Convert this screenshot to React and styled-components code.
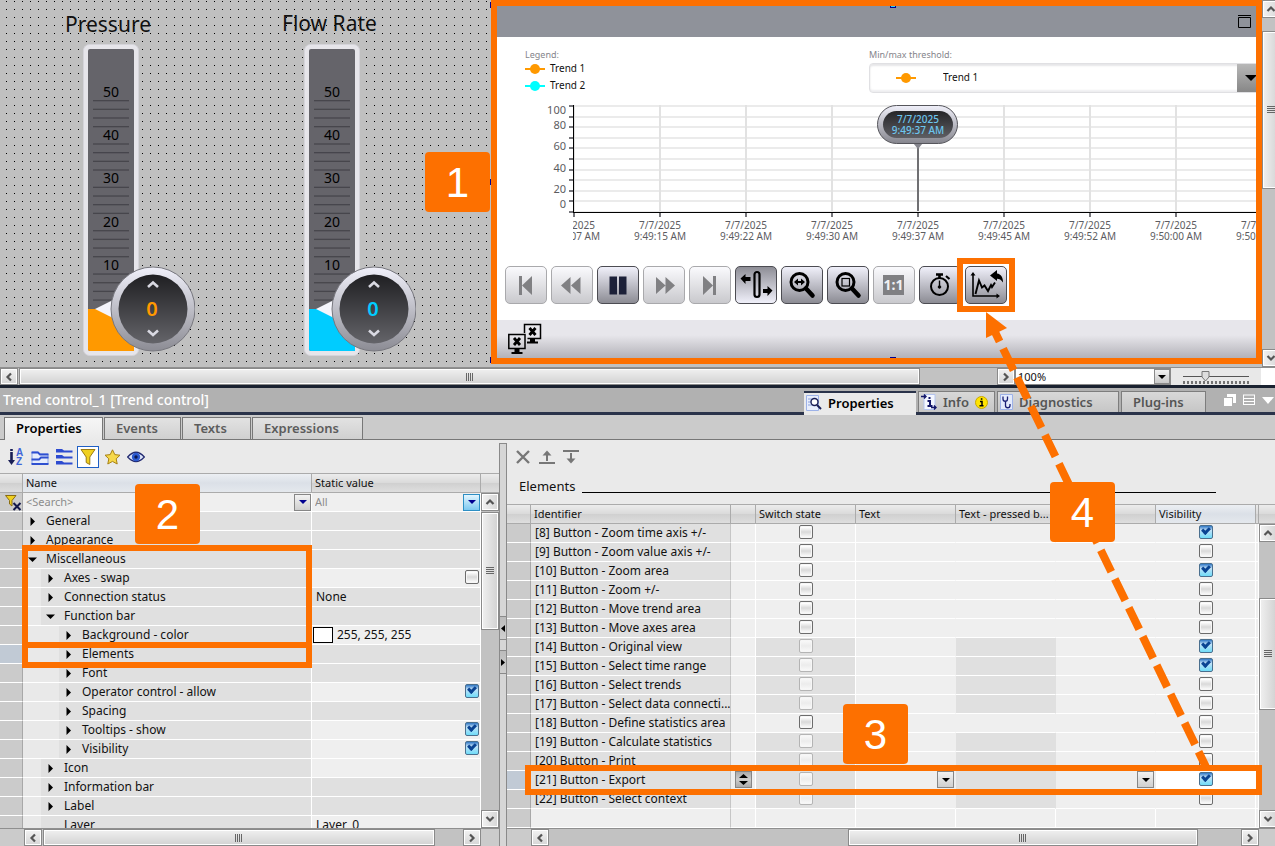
import React from "react";
import styled, { createGlobalStyle, css } from "styled-components";

const ORANGE = "#fd7000";

const GlobalStyle = createGlobalStyle`
  *, *::before, *::after { box-sizing: border-box; }
  body {
    margin: 0;
    background: #c0c0c0;
    color: #111;
    font-family: "Noto Sans", "Open Sans", sans-serif;
    font-size: 12px;
  }
  button, input, select { font: inherit; color: inherit; margin: 0; padding: 0; }
  h1, h2 { margin: 0; }
  td svg { display: block; }
`;

const Page = styled.div`
  position: relative;
  display: flex;
  flex-direction: column;
  height: 100vh;
  overflow: hidden;
`;

/* ---------- scroll bars ---------- */

const Bar = styled.div`
  display: flex;
  flex: ${(p) => (p.$vertical ? "0 0 auto" : "1 1 0")};
  flex-direction: ${(p) => (p.$vertical ? "column" : "row")};
  ${(p) => (p.$vertical ? "width: 18px;" : "height: 17px;")}
  background: #c2c2c2;
`;

const BarButton = styled.button`
  display: flex;
  flex: 0 0 18px;
  align-items: center;
  justify-content: center;
  border: 1px solid #8a8a8a;
  background: linear-gradient(${(p) => (p.$vertical ? "90deg" : "180deg")}, #f2f2f2, #d6d6d6);
  box-shadow: inset 0 0 0 1px #fff;
`;

const Thumb = styled.div`
  display: flex;
  flex: ${(p) => p.$size};
  align-items: center;
  justify-content: center;
  border: 1px solid #8a8a8a;
  background: linear-gradient(${(p) => (p.$vertical ? "90deg" : "180deg")}, #f0f0f0, #d2d2d2);
  box-shadow: inset 0 0 0 1px #fff;
`;

const Grip = styled.span`
  ${(p) =>
    p.$vertical
      ? css`
          width: 8px;
          height: 8px;
          background: repeating-linear-gradient(180deg, #666 0 1px, transparent 1px 2px);
        `
      : css`
          width: 8px;
          height: 8px;
          background: repeating-linear-gradient(90deg, #666 0 1px, transparent 1px 2px);
        `}
`;

const Space = styled.span`
  flex: ${(p) => p.$size};
`;

const turns = { up: 0, right: 90, down: 180, left: 270 };

function Chevron({ to }) {
  return (
    <svg width="10" height="10" viewBox="0 0 10 10" aria-hidden="true">
      <path d="M1.5 7 L5 3.5 L8.5 7" fill="none" stroke="#555" strokeWidth="2.2" transform={`rotate(${turns[to]} 5 5)`} />
    </svg>
  );
}

function ScrollBar({ vertical, before = "0 0 1px", thumb, after = "1 1 0", className }) {
  return (
    <Bar $vertical={vertical} className={className}>
      <BarButton $vertical={vertical} aria-label={vertical ? "Scroll up" : "Scroll left"}>
        <Chevron to={vertical ? "up" : "left"} />
      </BarButton>
      <Space $size={before} />
      <Thumb $vertical={vertical} $size={thumb}>
        <Grip $vertical={vertical} />
      </Thumb>
      <Space $size={after} />
      <BarButton $vertical={vertical} aria-label={vertical ? "Scroll down" : "Scroll right"}>
        <Chevron to={vertical ? "down" : "right"} />
      </BarButton>
    </Bar>
  );
}

/* ---------- screen editor ---------- */

const Editor = styled.section`
  display: flex;
  flex: 0 0 367px;
`;

const Canvas = styled.div`
  display: flex;
  flex: 1 1 0;
  min-width: 0;
  align-items: flex-start;
  background-color: #c0c0c0;
  background-image: linear-gradient(180deg, transparent 1px, #c0c0c0 1px),
    linear-gradient(90deg, #000 1px, #c0c0c0 1px);
  background-size: 8px 8px;
  background-position: 6px 1px;
`;

const GaugeArea = styled.div`
  position: relative;
  flex: 0 0 491px;
  align-self: stretch;
`;

const GaugeItem = styled.div`
  position: absolute;
  top: ${(p) => p.$y}px;
  left: ${(p) => p.$x}px;
`;

const GaugeTitle = styled.h2`
  font-size: 21px;
  font-weight: 400;
  line-height: 26px;
  white-space: nowrap;
`;

function Gauge({ id, color }) {
  const ticks = [];
  for (let i = 0; i <= 23; i += 1) {
    if (i % 5 !== 4) ticks.push(57 + i * 8.67);
  }
  const labels = [
    [50, 48],
    [40, 91],
    [30, 134],
    [20, 178],
    [10, 221],
  ];
  return (
    <svg width="112" height="314" viewBox="0 0 112 314">
      <defs>
        <linearGradient id={`${id}-ring`} x1="0" y1="0" x2="0" y2="1">
          <stop offset="0" stopColor="#f0f0fa" />
          <stop offset="1" stopColor="#8c8c94" />
        </linearGradient>
        <linearGradient id={`${id}-disk`} x1="0" y1="0" x2="0" y2="1">
          <stop offset="0" stopColor="#1f1f22" />
          <stop offset="1" stopColor="#646469" />
        </linearGradient>
      </defs>
      <rect x="0.5" y="0.5" width="55" height="311" rx="6" fill="#e6e5ea" stroke="#d5d4da" />
      <rect x="5" y="5" width="46" height="302" rx="2" fill="#65646a" />
      {ticks.map((y) => (
        <rect key={y} x="10" y={y - 1} width="36" height="1.3" fill="#47464c" />
      ))}
      <path d="M5 265 H51 V307 H7 Q5 307 5 305 Z" fill={color} />
      <path d="M12 265 L36 253 V277 Z" fill="#f4f4fb" />
      <g fontSize="14" textAnchor="middle" fill="#000">
        {labels.map(([n, y]) => (
          <text key={n} x="28" y={y + 5}>
            {n}
          </text>
        ))}
      </g>
      <circle cx="70" cy="265" r="42" fill={`url(#${id}-ring)`} stroke="#77777e" />
      <circle cx="70" cy="265" r="34.5" fill={`url(#${id}-disk)`} />
      <path d="M65 243 L70 238.5 L75 243 M65 286.500 L70 291 L75 286.500" fill="none" stroke="#d9d9e2" strokeWidth="2.600" />
      <text x="69" y="272" textAnchor="middle" fontSize="20" fontWeight="600" fill={color}>
        0
      </text>
    </svg>
  );
}

/* ---------- trend control ---------- */

const TrendFrame = styled.div`
  position: relative;
  flex: 1 1 0;
  min-width: 0;
  border: 6px solid ${ORANGE};
  background: #fff;
`;

const TrendHeader = styled.div`
  display: flex;
  justify-content: flex-end;
  padding: 9px 5px 9px 0;
  height: 31px;
  background: #8f929a;
`;

const TrendBody = styled.div`
  height: 283px;
  overflow: hidden;
`;

const LegendRow = styled.div`
  display: flex;
  padding: 13px 0 0 28px;
  height: 57px;
`;

const LegendColumn = styled.div`
  flex: ${(p) => (p.$grow ? "1 1 0" : "0 0 344px")};
  min-width: 0;
  margin-right: ${(p) => (p.$grow ? "-8px" : "0")};
`;

const Caption = styled.label`
  display: block;
  font-size: 9px;
  line-height: 10px;
  color: #85858b;
`;

const LegendItem = styled.div`
  display: flex;
  align-items: center;
  gap: 5px;
  font-size: 10px;
  line-height: 17px;
`;

const ComboBox = styled.div`
  position: relative;
  margin-top: 3px;
  height: 30px;
  border: 1px solid #e0e0e3;
  border-radius: 4px;
  background: #fff;
  box-shadow: inset 0 2px 2px #e6e6e8, inset 0 -2px 2px #eeeef0;
  overflow: hidden;

  select {
    width: 100%;
    height: 100%;
    padding: 0 0 2px 73px;
    border: 0;
    appearance: none;
    background: transparent;
    font-size: 10px;
  }
`;

const ComboMarker = styled.span`
  position: absolute;
  top: 0;
  bottom: 0;
  left: 26px;
  display: flex;
  align-items: center;
  pointer-events: none;
`;

const ComboArrow = styled.span`
  position: absolute;
  top: -1px;
  right: -1px;
  display: flex;
  align-items: center;
  justify-content: center;
  width: 27px;
  height: 30px;
  background: linear-gradient(#b9b9b9, #858585);
  pointer-events: none;
`;

function Marker({ color }) {
  return (
    <svg width="20" height="12" viewBox="0 0 20 12" aria-hidden="true">
      <path d="M0 6 H20" stroke={color} strokeWidth="2" />
      <circle cx="10" cy="6" r="5" fill={color} />
    </svg>
  );
}

const ChartSvg = styled.svg`
  display: block;
  width: 100%;
  height: 150px;
`;

const times = [
  "9:49:07 AM",
  "9:49:15 AM",
  "9:49:22 AM",
  "9:49:30 AM",
  "9:49:37 AM",
  "9:49:45 AM",
  "9:49:52 AM",
  "9:50:00 AM",
  "9:50:07 AM",
];
const yTicks = [11, 22, 32, 43, 53, 64, 75, 85, 96, 106, 117];
const yLabels = [
  ["100", 20],
  ["80", 35],
  ["60", 56],
  ["40", 78],
  ["20", 99],
  ["0", 114],
];

function Chart() {
  return (
    <ChartSvg role="img" aria-label="Trend chart">
      <defs>
        <linearGradient id="pill-ring" x1="0" y1="0" x2="0" y2="1">
          <stop offset="0" stopColor="#f0f0fa" />
          <stop offset="1" stopColor="#85858d" />
        </linearGradient>
        <linearGradient id="pill-disk" x1="0" y1="0" x2="0" y2="1">
          <stop offset="0" stopColor="#242427" />
          <stop offset="1" stopColor="#5e5e63" />
        </linearGradient>
        <clipPath id="plot-clip">
          <rect x="76" y="0" width="4000" height="150" />
        </clipPath>
      </defs>
      <g clipPath="url(#plot-clip)">
        {yTicks.map((y) => (
          <rect key={y} x="77" y={y} width="100%" height="2" fill="#ebebeb" />
        ))}
        {times.map((t, i) => (
          <rect key={t} x={76 + 86 * i} y="11" width="2" height="106" fill="#e2e2e2" />
        ))}
        {times.map((t, i) => (
          <rect key={t} x={76 + 86 * i} y="118" width="2" height="5" fill="#77777c" />
        ))}
        <g fontSize="10" textAnchor="middle" fill="#5c5c5f">
          {times.map((t, i) => (
            <g key={t}>
              <text x={77 + 86 * i} y="135">
                7/7/2025
              </text>
              <text x={77 + 86 * i} y="146">
                {t}
              </text>
            </g>
          ))}
        </g>
      </g>
      {yTicks.map((y) => (
        <rect key={y} x="72" y={y} width="5" height="2" fill="#77777c" />
      ))}
      <g fontSize="11" textAnchor="end" fill="#5c5c5f">
        {yLabels.map(([t, y]) => (
          <text key={t} x="69" y={y}>
            {t}
          </text>
        ))}
      </g>
      <rect x="76" y="11" width="1" height="107" fill="#000" />
      <rect x="76" y="118" width="100%" height="1" fill="#000" />
      <rect x="420" y="50" width="2" height="67" fill="#707073" />
      <path d="M416 49 H426 L421 55 Z" fill="#85858d" />
      <rect x="380.500" y="11.500" width="80" height="38" rx="19" fill="url(#pill-ring)" stroke="#55555b" />
      <rect x="386" y="17" width="70" height="27" rx="13.500" fill="url(#pill-disk)" />
      <g fontSize="10" fontWeight="500" textAnchor="middle" fill="#6cc5ee">
        <text x="421" y="29">
          7/7/2025
        </text>
        <text x="421" y="40">
          9:49:37 AM
        </text>
      </g>
    </ChartSvg>
  );
}

const FunctionBar = styled.div`
  display: flex;
  gap: 4px;
  margin: 22px 0 0 8px;
`;

const FunctionButton = styled.button`
  position: relative;
  width: 42px;
  height: 38px;
  border: 1px solid ${(p) => (p.$off ? "#a9a9ac" : "#4c4c52")};
  border-radius: 5px;
  background: ${(p) =>
    p.$off
      ? "linear-gradient(#fafafd, #c9c9cd)"
      : p.$pressed
        ? "linear-gradient(#8e8e96, #f0f0fa)"
        : "linear-gradient(#f0f0fa, #8c8c94)"};

  > svg {
    display: block;
    margin: -1px;
  }
`;

const ExportFrame = styled.span`
  position: absolute;
  inset: -9px;
  border: 6px solid ${ORANGE};
`;

const glyphs = {
  first: <path fill="#808083" d="M14 10h3v19h-3z M27 10v19L17 19.500z" />,
  back: <path fill="#808083" d="M19.500 11v17L10 19.500z M29.500 11v17L20 19.500z" />,
  pause: <path fill="#1c2038" d="M12.500 10.500h7.500v18h-7.500z M22 10.500h7.500v18H22z" />,
  forward: <path fill="#808083" d="M13 11v17l9.500-8.500z M22.500 11v17l9.500-8.500z" />,
  last: <path fill="#808083" d="M14 10v19l10-9.500z M24 10h3v19h-3z" />,
  ruler: (
    <g>
      <rect x="19.500" y="6" width="5" height="25" rx="2.500" fill="none" stroke="#000" strokeWidth="2.200" />
      <path d="M5.500 12.500l5-4.500v3h5v4h-5v3z M37.500 24.500l-5-4.500v3h-4.500v4h4.500v3z" fill="#000" />
    </g>
  ),
  zoomTime: (
    <g>
      <circle cx="18.500" cy="16" r="8.500" fill="none" stroke="#000" strokeWidth="3" />
      <path d="M25 22.500l6.500 7" stroke="#000" strokeWidth="4.500" strokeLinecap="round" />
      <path d="M13 16l4-3.500v2.500h3v-2.500l4 3.500-4 3.500v-2.500h-3v2.500z" fill="#000" />
    </g>
  ),
  zoomArea: (
    <g>
      <circle cx="18.500" cy="16" r="8.500" fill="none" stroke="#000" strokeWidth="3" />
      <path d="M25 22.500l6.500 7" stroke="#000" strokeWidth="4.500" strokeLinecap="round" />
      <rect x="15" y="12.500" width="7.500" height="7.500" fill="none" stroke="#000" strokeWidth="1.200" />
    </g>
  ),
  original: (
    <g>
      <path d="M10 9h21v20H10z" fill="#808083" />
      <text x="20.500" y="24" textAnchor="middle" fontSize="14" fontWeight="700" fill="#f0f0f4">
        1:1
      </text>
    </g>
  ),
  timer: (
    <g fill="none" stroke="#000">
      <circle cx="20.500" cy="20.500" r="8.500" strokeWidth="2" />
      <path d="M17 8.500h7M20.500 8v4" strokeWidth="2.600" />
      <path d="M27 10l3.500 3" strokeWidth="2.200" />
      <path d="M20.500 14.500v6" strokeWidth="1.400" />
      <circle cx="20.500" cy="21" r="1.300" fill="#000" />
    </g>
  ),
  exportData: (
    <g fill="none" stroke="#000">
      <path d="M8 8V30H33" strokeWidth="1.600" />
      <path d="M5.500 9.500L8 6l2.500 3.500z M31.500 27.500l3.500 2.500-3.500 2.500z" fill="#000" stroke="none" />
      <path d="M10.500 28L14 14.500L17 21.500L19.500 19.500L23 25L26 19L27 21L30 16.500" strokeWidth="1.900" />
      <path d="M25 9.500L32 4v3.500c4 .500 6 4 6 9-2-3-3.500-3.800-6-3.800V15z" fill="#000" stroke="none" />
    </g>
  ),
};

const functionButtons = [
  { id: "first", label: "First record", off: true },
  { id: "back", label: "Previous", off: true },
  { id: "pause", label: "Start / stop" },
  { id: "forward", label: "Next", off: true },
  { id: "last", label: "Last record", off: true },
  { id: "ruler", label: "Ruler", pressed: true },
  { id: "zoomTime", label: "Zoom time axis" },
  { id: "zoomArea", label: "Zoom area" },
  { id: "original", label: "Original view", off: true },
  { id: "timer", label: "Select time range" },
  { id: "exportData", label: "Export", framed: true },
];

const StatusBar = styled.div`
  height: 38px;
  padding: 2px 0 0 11px;
  background: linear-gradient(#e7e6eb 40%, #b3b2b8);

  svg {
    display: block;
  }
`;

const Handle = styled.i`
  position: absolute;
  top: ${(p) => p.$y}px;
  right: 0;
  width: 1px;
  height: 6px;
  background: #000090;
`;

const EdgeHandle = styled.i`
  position: absolute;
  top: ${(p) => (p.$bottom ? "auto" : "0")};
  bottom: ${(p) => (p.$bottom ? "0" : "auto")};
  left: 393px;
  width: 6px;
  height: ${(p) => (p.$bottom ? 1 : 2)}px;
  border: 1px solid #000090;
  border-top-width: 0;
  background: #30d8e8;
`;

function TrendControl() {
  return (
    <TrendFrame>
      <TrendHeader>
        <svg width="13" height="13" viewBox="0 0 13 13" aria-label="Maximize">
          <path d="M0 .500H13M.500 2.500H12.500V12.500H.500z" fill="none" stroke="#000" />
        </svg>
      </TrendHeader>
      <TrendBody>
        <LegendRow>
          <LegendColumn>
            <Caption as="div">Legend:</Caption>
            <LegendItem>
              <Marker color="#ff9900" />
              Trend 1
            </LegendItem>
            <LegendItem>
              <Marker color="#00ffff" />
              Trend 2
            </LegendItem>
          </LegendColumn>
          <LegendColumn $grow>
            <Caption htmlFor="threshold">Min/max threshold:</Caption>
            <ComboBox>
              <ComboMarker>
                <Marker color="#ff9900" />
              </ComboMarker>
              <select id="threshold">
                <option>Trend 1</option>
              </select>
              <ComboArrow>
                <svg width="12" height="6" viewBox="0 0 12 6" aria-hidden="true">
                  <path d="M0 0H12L6 6z" />
                </svg>
              </ComboArrow>
            </ComboBox>
          </LegendColumn>
        </LegendRow>
        <Chart />
        <FunctionBar>
          {functionButtons.map((b) => (
            <FunctionButton key={b.id} aria-label={b.label} $off={b.off} $pressed={b.pressed}>
              <svg width="42" height="38" viewBox="0 0 42 38">
                {glyphs[b.id]}
              </svg>
              {b.framed && <ExportFrame />}
            </FunctionButton>
          ))}
        </FunctionBar>
      </TrendBody>
      <StatusBar>
        <svg width="34" height="34" viewBox="0 0 34 34" aria-label="Not connected">
          <g fill="none" stroke="#000">
            <path d="M16.500 11V2.500H32.500V16.500H19.500" strokeWidth="1.500" />
            <path d="M.800 12.500H17V26.500H.800z" strokeWidth="1.500" />
            <path d="M21.500 6l6 7M27.500 6l-6 7M6 16l6 7M12 16l-6 7" strokeWidth="2.800" />
            <path d="M24.500 17v3M9 27v3" strokeWidth="5" />
            <path d="M19 20.500H30M3.500 31H14.500" strokeWidth="2" />
          </g>
        </svg>
      </StatusBar>
      <EdgeHandle />
      <EdgeHandle $bottom />
    </TrendFrame>
  );
}

/* ---------- bottom strip of the editor ---------- */

const BottomStrip = styled.div`
  display: flex;
  flex: 0 0 18px;
  background: #fff;
  border-top: 1px solid #8f8f8f;
`;

const LeftScroll = styled.div`
  display: flex;
  flex: 1 1 0;
`;

const ZoomSelect = styled.div`
  position: relative;
  flex: 0 0 156px;
  border: 1px solid #8a8a8a;
  background: #fff;

  select {
    display: block;
    width: 100%;
    height: 15px;
    padding-left: 2px;
    border: 0;
    appearance: none;
    background: transparent;
    font-size: 11px;
    line-height: 15px;
  }
`;

const DropMark = styled.span`
  position: absolute;
  top: 0;
  right: 0;
  bottom: 0;
  display: flex;
  align-items: center;
  justify-content: center;
  width: 16px;
  border: 1px solid #8a8a8a;
  background: linear-gradient(#f2f2f2, #c9c9c9);
  pointer-events: none;
`;

const ZoomSlider = styled.div`
  flex: 0 0 90px;
  padding-left: 12px;
  background: #e8e8e8;

  svg {
    display: block;
  }
`;

const Divider = styled.div`
  flex: 0 0 3px;
  background: #1a2230;
`;

/* ---------- inspector ---------- */

const TitleBar = styled.header`
  display: flex;
  flex: 0 0 27px;
  align-items: flex-end;
  border-bottom: 3px solid #2a334a;
  background: #b1b1b1;
`;

const Title = styled.h1`
  flex: 0 0 804px;
  padding-left: 3px;
  color: #fff;
  font-size: 14px;
  font-weight: 500;
  line-height: 24px;
`;

const MainTab = styled.button`
  display: flex;
  align-items: center;
  gap: 6px;
  width: ${(p) => p.$width}px;
  height: ${(p) => (p.$active ? 24 : 21)}px;
  margin: 0 2px ${(p) => (p.$active ? -3 : 0)}px 0;
  padding: 0 4px ${(p) => (p.$active ? 3 : 0)}px ${(p) => (p.$plain ? 11 : 2)}px;
  border: solid ${(p) => (p.$active ? "#2a334a" : "#7d7d7d")};
  border-width: ${(p) => (p.$active ? "2px 0 0" : "1px 1px 0")};
  background: ${(p) => (p.$active ? "#eaeaea" : "linear-gradient(#d8d8d8, #c6c6c6)")};
  color: ${(p) => (p.$active ? "#000" : "#555")};
  font-size: 13px;
  font-weight: 600;
  line-height: 18px;
`;

const WindowIcons = styled.div`
  display: flex;
  align-items: center;
  gap: 7px;
  margin-left: auto;
  height: 24px;
  padding-right: 1px;
`;

const SubTabs = styled.nav`
  display: flex;
  flex: 0 0 25px;
  gap: 1px;
  align-items: flex-end;
  padding-left: 4px;
  border-bottom: 1px solid #777;
  background: #cbcbcb;
`;

const SubTab = styled.button`
  width: ${(p) => p.$width}px;
  height: ${(p) => (p.$active ? 23 : 22)}px;
  margin-bottom: ${(p) => (p.$active ? -1 : 0)}px;
  padding: 0 0 ${(p) => (p.$active ? 3 : 2)}px 11px;
  border: solid #777;
  border-width: 1px 1px 0;
  background: ${(p) => (p.$active ? "linear-gradient(#f6f6f6, #eaeaea)" : "linear-gradient(#e2e2e2, #d0d0d0)")};
  color: ${(p) => (p.$active ? "#000" : "#5c5c5c")};
  font-size: 13px;
  font-weight: 600;
  text-align: left;
`;

const Body = styled.div`
  display: flex;
  flex: 1 1 0;
  min-height: 0;
  background: #eaeaea;
`;

const Pane = styled.section`
  position: relative;
  display: flex;
  flex-direction: column;
  flex: ${(p) => (p.$width ? `0 0 ${p.$width}px` : "1 1 0")};
  min-width: 0;
`;

const IconBar = styled.div`
  display: flex;
  align-items: center;
  gap: 4px;
  height: 33px;
  padding: 0 0 0 6px;
`;

const IconButton = styled.button`
  display: flex;
  align-items: center;
  justify-content: center;
  width: 20px;
  height: 22px;
  border: 0;
  background: transparent;

  ${(p) =>
    p.$on &&
    css`
      width: 22px;
      margin: 0 -1px;
      border: 1px solid #1f5fc4;
      background: #fff;
    `}
`;

const GridArea = styled.div`
  display: flex;
  flex: 1 1 0;
  min-height: 0;
`;

const GridClip = styled.div`
  flex: 1 1 0;
  min-width: 0;
  overflow: hidden;
  background: #cbcbcb;
`;

const Table = styled.table`
  width: 100%;
  table-layout: fixed;
  border-collapse: separate;
  border-spacing: 0;
  font-size: 12px;
  line-height: 18px;
`;

const Th = styled.th`
  height: 20px;
  padding: 0 0 0 3px;
  border: solid #ababab;
  border-width: 1px 1px 1px 0;
  background: ${(p) =>
    p.$sorted
      ? "linear-gradient(#eceff3, #dbe0e7 50%, #e4e8ed)"
      : "linear-gradient(#ececec, #dadada 50%, #d0d0d0 52%, #dedede)"};
  font-size: 11px;
  font-weight: 400;
  text-align: left;
  white-space: nowrap;
  overflow: hidden;
`;

const Td = styled.td`
  height: 19px;
  padding: 0 ${(p) => (p.$right ? 1 : 0)}px 0 ${(p) => p.$pad || 0}px;
  border-bottom: 1px solid #fff;
  border-right: 1px solid ${(p) => (p.$edge ? p.$edge : "#fff")};
  background: ${(p) => p.$bg || "#efefef"};
  text-align: ${(p) => (p.$right ? "right" : p.$center ? "center" : "left")};
  white-space: nowrap;
  overflow: hidden;
`;

const NameCell = styled.div`
  display: flex;
  align-items: center;
  height: 18px;
  margin-left: ${(p) => p.$level * 18}px;
  padding-left: 4px;
  gap: 4px;
  background: #e0e0e0;
`;

const ArrowSlot = styled.span`
  display: flex;
  align-items: center;
  justify-content: center;
  width: 10px;
  margin-right: 5px;
`;

function TreeArrow({ open }) {
  return (
    <svg width="9" height="9" viewBox="0 0 9 9" aria-hidden="true">
      <path d={open ? "M0 2.500H9L4.500 7z" : "M2.500 0V9L7 4.500z"} />
    </svg>
  );
}

const CheckBox = styled.input.attrs({ type: "checkbox" })`
  position: relative;
  display: inline-block;
  width: 14px;
  height: 14px;
  margin: 1px 0 0;
  vertical-align: top;
  appearance: none;
  border: 1px solid #6c6c6c;
  border-radius: 2px;
  background: linear-gradient(#fff 10%, #d9d9d9 50%, #fff);
  box-shadow: inset 0 0 0 1px #f6f6f6;

  &:disabled {
    border-color: #b4b4b4;
    background: linear-gradient(#fafafa, #ececec 50%, #fafafa);
  }

  &:checked {
    border-color: #4a6f8e;
    background: linear-gradient(#2f77c6, #c4e2f8 35%, #6fdcf8);
    box-shadow: none;
  }

  &:checked::after {
    content: "";
    position: absolute;
    top: 1px;
    left: 2px;
    width: 8px;
    height: 6px;
    border: solid #0a4493;
    border-width: 0 0 3px 3px;
    transform: rotate(-45deg);
  }
`;

const FilterField = styled.div`
  display: flex;
  align-items: center;
  height: 18px;
  background: #efefef;

  input {
    flex: 1 1 0;
    min-width: 0;
    height: 17px;
    padding-left: 3px;
    border: 0;
    background: transparent;
    outline: 0;
    font-size: 11px;
  }

  input::placeholder {
    color: #8c8c8c;
    opacity: 1;
  }
`;

const DropButton = styled.button`
  display: inline-flex;
  align-items: center;
  justify-content: center;
  width: 17px;
  height: 17px;
  border: 1px solid ${(p) => (p.$hot ? "#2d8fc4" : "#868686")};
  background: ${(p) => (p.$hot ? "linear-gradient(#e4f6ff, #7cc8f0)" : "linear-gradient(#f2f2f2, #cfcfcf)")};
  vertical-align: top;
`;

const SpinButton = styled(DropButton)`
  background: linear-gradient(#aaa, #ccc 50%, #aaa);
`;

const Swatch = styled.span`
  display: inline-block;
  width: 20px;
  height: 16px;
  margin: 1px 4px 0 0;
  border: 1px solid #000;
  background: #fff;
  vertical-align: top;
`;

const SideBarColumn = styled.div`
  display: flex;
  flex-direction: column;
  flex: 0 0 ${(p) => p.$width}px;
  overflow: hidden;
  background: #c2c2c2;

  > div:last-child {
    flex: 1 1 0;
  }
`;

const ScrollHead = styled.div`
  flex: 0 0 ${(p) => p.$height}px;
  border: solid #ababab;
  border-width: 1px 0;
  background: linear-gradient(#ececec, #dadada 50%, #d0d0d0 52%, #dedede);
`;

const FootBar = styled.div`
  display: flex;
  flex: 0 0 16px;
  padding: 0 ${(p) => p.$right}px 0 ${(p) => p.$left}px;
  background: #cbcbcb;
  border-top: 1px solid #8f8f8f;
`;

const Splitter = styled.div`
  display: flex;
  flex-direction: column;
  align-items: center;
  justify-content: center;
  gap: 10px;
  flex: 0 0 8px;
  margin-top: 3px;
  border: 1px solid #8a8a8a;
  border-width: 1px 1px 0;
  background: #d6d6d6;
`;

const SplitMark = styled.button`
  display: flex;
  align-items: center;
  justify-content: center;
  width: 6px;
  height: 24px;
  border: solid #8a8a8a;
  border-width: 1px 0;
  background: linear-gradient(#bbb, #d0d0d0);
`;

const Frame = styled.div`
  position: absolute;
  top: ${(p) => p.$top}px;
  left: ${(p) => p.$left}px;
  right: ${(p) => p.$right}px;
  height: ${(p) => p.$height}px;
  border: 6px solid ${ORANGE};
  pointer-events: none;
`;

const SectionLabel = styled.div`
  display: flex;
  align-items: flex-end;
  gap: 7px;
  height: 31px;
  padding: 0 59px 10px 12px;
  font-size: 13px;
  line-height: 16px;

  &::after {
    content: "";
    flex: 1 1 0;
    height: 1px;
    margin-bottom: 1px;
    background: #000;
  }
`;

const DARK = "#e0e0e0";
const LIGHT = "#efefef";

const treeRows = [
  { name: "General", level: 0 },
  { name: "Appearance", level: 0 },
  { name: "Miscellaneous", level: 0, open: true },
  { name: "Axes - swap", level: 1, check: "off" },
  { name: "Connection status", level: 1, text: "None" },
  { name: "Function bar", level: 1, open: true },
  { name: "Background - color", level: 2, color: "255, 255, 255" },
  { name: "Elements", level: 2, current: true },
  { name: "Font", level: 2 },
  { name: "Operator control - allow", level: 2, check: "on" },
  { name: "Spacing", level: 2 },
  { name: "Tooltips - show", level: 2, check: "on" },
  { name: "Visibility", level: 2, check: "on" },
  { name: "Icon", level: 1, editable: true },
  { name: "Information bar", level: 1 },
  { name: "Label", level: 1 },
  { name: "Layer", level: 1, text: "Layer_0", leaf: true, editable: true },
];

const elementRows = [
  { name: "[8] Button - Zoom time axis +/-", visible: true },
  { name: "[9] Button - Zoom value axis +/-" },
  { name: "[10] Button - Zoom area", visible: true },
  { name: "[11] Button - Zoom +/-" },
  { name: "[12] Button - Move trend area" },
  { name: "[13] Button - Move axes area" },
  { name: "[14] Button - Original view", visible: true, fixed: true },
  { name: "[15] Button - Select time range", visible: true, fixed: true },
  { name: "[16] Button - Select trends", fixed: true },
  { name: "[17] Button - Select data connecti...", fixed: true },
  { name: "[18] Button - Define statistics area" },
  { name: "[19] Button - Calculate statistics", fixed: true },
  { name: "[20] Button - Print", fixed: true },
  { name: "[21] Button - Export", visible: true, fixed: true, current: true },
  { name: "[22] Button - Select context", fixed: true },
];

function DownMark({ color = "#000" }) {
  return (
    <svg width="8" height="4" viewBox="0 0 8 4" aria-hidden="true">
      <path d="M0 0H8L4 4z" fill={color} />
    </svg>
  );
}

function PropertyPane() {
  return (
    <Pane $width={499}>
      <IconBar>
        <IconButton aria-label="Sort">
          <svg width="16" height="18" viewBox="0 0 16 18">
            <path d="M3.500 1v12" stroke="#1a1f55" strokeWidth="2.600" strokeDasharray="2 1 20" />
            <path d="M0 12h7L3.500 17z" fill="#1a1f55" />
            <g fontFamily="Liberation Sans, sans-serif" fontSize="10" fontWeight="700" fill="#3f66d8">
              <text x="8" y="8">A</text>
              <text x="8" y="17">Z</text>
            </g>
          </svg>
        </IconButton>
        <IconButton aria-label="Group view">
          <svg width="18" height="16" viewBox="0 0 18 16">
            <path d="M1 3H7L9 5H17V15H1z" fill="#e6edfc" stroke="#86a2ea" />
            <path d="M.500 3.500H7L9 5.500H17.500M.500 10.500H8L10 8.500H17.500M.500 15H17.500" fill="none" stroke="#2f50d0" strokeWidth="1.800" />
          </svg>
        </IconButton>
        <IconButton aria-label="List view">
          <svg width="18" height="16" viewBox="0 0 18 16">
            <path d="M1 0h6l2 1.500h8.500v2H1z M1 6h6l2 1.500h8.500v2H1z M1 12h6l2 1.500h8.500v2H1z" fill="#2d4bd0" />
          </svg>
        </IconButton>
        <IconButton $on aria-label="Filter">
          <svg width="16" height="18" viewBox="0 0 16 18">
            <path d="M1 1.500H15L9.800 9V16.500L6.200 14.500V9z" fill="#f0d020" stroke="#9a7a10" />
          </svg>
        </IconButton>
        <IconButton aria-label="Favorites">
          <svg width="17" height="16" viewBox="0 0 17 16">
            <path d="M8.500 .800L10.800 5.600L16 6.200L12.200 9.800L13.200 15L8.500 12.400L3.800 15L4.800 9.800L1 6.200L6.200 5.600z" fill="#f6d84a" stroke="#a88215" />
          </svg>
        </IconButton>
        <IconButton aria-label="Show">
          <svg width="18" height="12" viewBox="0 0 18 12">
            <path d="M.700 6Q9-3.500 17.300 6Q9 15 .700 6z" fill="#dfe7fb" stroke="#222a70" strokeWidth="1.300" />
            <circle cx="9" cy="6" r="4.200" fill="#2c5ad0" />
            <circle cx="9" cy="6" r="1.700" fill="#0b1850" />
          </svg>
        </IconButton>
      </IconBar>
      <GridArea>
        <GridClip>
          <Table>
            <colgroup>
              <col style={{ width: 23 }} />
              <col style={{ width: 289 }} />
              <col />
            </colgroup>
            <thead>
              <tr>
                <Th aria-label="Marker" />
                <Th $sorted>Name</Th>
                <Th>Static value</Th>
              </tr>
            </thead>
            <tbody>
              <tr>
                <Td $bg="#cbcbcb" $edge="#a8a8a8" $pad={5}>
                  <svg width="17" height="17" viewBox="0 0 17 17" aria-label="Clear filter">
                    <path d="M.500 1.500H11L7 6.500V12L4.500 10V6.500z" fill="#f0d020" stroke="#8a6c10" />
                    <path d="M8.500 9l7 7M15.500 9l-7 7" stroke="#14184a" strokeWidth="2" />
                  </svg>
                </Td>
                <Td>
                  <FilterField>
                    <input placeholder="<Search>" aria-label="Search name" />
                    <DropButton aria-label="Name filter">
                      <DownMark color="#000090" />
                    </DropButton>
                  </FilterField>
                </Td>
                <Td>
                  <FilterField>
                    <input placeholder="All" aria-label="Filter value" />
                    <DropButton $hot aria-label="Value filter">
                      <DownMark color="#000090" />
                    </DropButton>
                  </FilterField>
                </Td>
              </tr>
              {treeRows.map((r) => (
                <tr key={r.name}>
                  <Td $bg={r.current ? "#c1cad5" : "#cbcbcb"} $edge="#a8a8a8" />
                  <Td $bg="#e9e9e9">
                    <NameCell $level={r.level}>
                      <ArrowSlot>{!r.leaf && <TreeArrow open={r.open} />}</ArrowSlot>
                      {r.name}
                    </NameCell>
                  </Td>
                  <Td
                    $bg={r.check || r.color || r.editable ? LIGHT : DARK}
                    $right={Boolean(r.check)}
                    $pad={r.text ? 4 : 1}
                  >
                    {r.check && <CheckBox defaultChecked={r.check === "on"} aria-label={r.name} />}
                    {r.color && <Swatch />}
                    {r.color || r.text}
                  </Td>
                </tr>
              ))}
            </tbody>
          </Table>
        </GridClip>
        <SideBarColumn $width={18}>
          <ScrollHead $height={20} />
          <ScrollBar vertical thumb="0 0 118px" />
        </SideBarColumn>
      </GridArea>
      <FootBar $left={24} $right={18}>
        <ScrollBar before="0 0 1px" thumb="0 0 392px" />
      </FootBar>
      <Frame $top={105} $left={22} $right={187} $height={103} />
      <Frame $top={202} $left={22} $right={187} $height={26} />
    </Pane>
  );
}

function ElementsPane() {
  return (
    <Pane>
      <IconBar>
        <IconButton aria-label="Delete">
          <svg width="16" height="16" viewBox="0 0 16 16">
            <path d="M2 2l12 12M14 2L2 14" stroke="#777" strokeWidth="2.400" />
          </svg>
        </IconButton>
        <IconButton aria-label="Move up">
          <svg width="16" height="16" viewBox="0 0 16 16">
            <path d="M8 5v7M0 14h16" stroke="#777" strokeWidth="2" />
            <path d="M3.500 6.500L8 1.500l4.500 5z" fill="#777" />
          </svg>
        </IconButton>
        <IconButton aria-label="Move down">
          <svg width="16" height="16" viewBox="0 0 16 16">
            <path d="M0 2h16M8 4v7" stroke="#777" strokeWidth="2" />
            <path d="M3.500 9.500L8 14.500l4.500-5z" fill="#777" />
          </svg>
        </IconButton>
      </IconBar>
      <SectionLabel>Elements</SectionLabel>
      <GridArea>
        <GridClip>
          <Table>
            <colgroup>
              <col style={{ width: 24 }} />
              <col style={{ width: 200 }} />
              <col style={{ width: 25 }} />
              <col style={{ width: 100 }} />
              <col style={{ width: 100 }} />
              <col style={{ width: 100 }} />
              <col style={{ width: 100 }} />
              <col style={{ width: 100 }} />
              <col />
            </colgroup>
            <thead>
              <tr>
                <Th aria-label="Marker" />
                <Th>Identifier</Th>
                <Th aria-label="Order" />
                <Th>Switch state</Th>
                <Th>Text</Th>
                <Th>Text - pressed b...</Th>
                <Th aria-label="Options" />
                <Th $sorted>Visibility</Th>
                <Th aria-label="More" />
              </tr>
            </thead>
            <tbody>
              {elementRows.map((r) => (
                <tr key={r.name}>
                  <Td $bg={r.current ? "#c1cad5" : "#cbcbcb"} $edge="#a8a8a8" />
                  <Td $bg={DARK} $edge="#c6c6c6" $pad={4}>
                    {r.name}
                  </Td>
                  <Td $center>
                    {r.current && (
                      <SpinButton aria-label="Change order">
                        <svg width="9" height="11" viewBox="0 0 9 11">
                          <path d="M4.500 0L9 4H0z M0 7H9L4.500 11z" />
                        </svg>
                      </SpinButton>
                    )}
                  </Td>
                  <Td $bg={r.fixed ? DARK : LIGHT} $center>
                    <CheckBox disabled={r.fixed} aria-label={`Switch state ${r.name}`} />
                  </Td>
                  <Td $right={r.current} $edge={LIGHT}>
                    {r.current && (
                      <DropButton aria-label="Text options">
                        <DownMark />
                      </DropButton>
                    )}
                  </Td>
                  <Td $bg={r.fixed ? DARK : LIGHT} $edge={r.fixed ? DARK : LIGHT} />
                  <Td $right={r.current} $edge={LIGHT}>
                    {r.current && (
                      <DropButton aria-label="Pressed text options">
                        <DownMark />
                      </DropButton>
                    )}
                  </Td>
                  <Td $bg={r.current ? "#fff" : LIGHT} $center>
                    <CheckBox defaultChecked={r.visible} aria-label={`Visibility ${r.name}`} />
                  </Td>
                  <Td />
                </tr>
              ))}
              <tr>
                <Td $bg="#cbcbcb" $edge="#a8a8a8" />
                <Td $edge="#c6c6c6" />
                {[0, 1, 2, 3, 4, 5, 6].map((n) => (
                  <Td key={n} />
                ))}
              </tr>
            </tbody>
          </Table>
        </GridClip>
        <SideBarColumn $width={16}>
          <ScrollHead $height={20} />
          <ScrollBar vertical before="57 1 0" thumb="0 0 112px" after="101 1 0" />
        </SideBarColumn>
      </GridArea>
      <FootBar $left={24} $right={16}>
        <ScrollBar before="298 1 0" thumb="0 0 350px" after="43 1 0" />
      </FootBar>
      <Frame $top={325} $left={18} $right={13} $height={30} />
    </Pane>
  );
}

/* ---------- callouts ---------- */

const Callout = styled.div`
  position: absolute;
  top: ${(p) => p.$y}px;
  left: ${(p) => p.$x}px;
  width: 65px;
  height: 60px;
  border-radius: 4px;
  background: ${ORANGE};
  color: #fff;
  font: 42px/61px "Liberation Sans", sans-serif;
  text-align: center;
`;

const ArrowLayer = styled.svg`
  position: absolute;
  top: 312px;
  left: 980px;
  pointer-events: none;
`;

export default function App() {
  return (
    <Page>
      <GlobalStyle />
      <Editor>
        <Canvas>
          <GaugeArea>
            <GaugeItem $x={65} $y={11}>
              <GaugeTitle>Pressure</GaugeTitle>
            </GaugeItem>
            <GaugeItem $x={282} $y={10}>
              <GaugeTitle>Flow Rate</GaugeTitle>
            </GaugeItem>
            <GaugeItem $x={83} $y={44}>
              <Gauge id="pressure" color="#ff9900" />
            </GaugeItem>
            <GaugeItem $x={304} $y={44}>
              <Gauge id="flow" color="#00ccff" />
            </GaugeItem>
            <Handle $y={2} />
            <Handle $y={179} />
            <Handle $y={357} />
          </GaugeArea>
          <TrendControl />
        </Canvas>
        <SideBarColumn $width={13}>
          <ScrollBar vertical before="0 0 13px" thumb="0 0 158px" />
        </SideBarColumn>
      </Editor>
      <BottomStrip>
        <LeftScroll>
          <ScrollBar thumb="904 1 0" after="77 1 0" />
        </LeftScroll>
        <ZoomSelect>
          <select aria-label="Zoom" defaultValue="100%">
            <option>100%</option>
          </select>
          <DropMark>
            <DownMark />
          </DropMark>
        </ZoomSelect>
        <ZoomSlider>
          <svg width="70" height="17" viewBox="0 0 70 17" aria-label="Zoom slider">
            <path d="M0 8.500H66" stroke="#555" />
            <path d="M.500 14.500H67" stroke="#000" strokeWidth="3" strokeDasharray="1 3" />
            <path d="M19 3.500H26V9L22.500 13L19 9z" fill="#ddd" stroke="#777" />
          </svg>
        </ZoomSlider>
        <Space $size="0 0 14px" />
      </BottomStrip>
      <Divider />
      <TitleBar>
        <Title>Trend control_1 [Trend control]</Title>
        <MainTab $active $width={112}>
          <svg width="16" height="16" viewBox="0 0 16 16" aria-hidden="true">
            <path d="M.500 .500H12.500V15.500H.500z" fill="#e8eefc" stroke="#9db2e8" />
            <path d="M2 4h4M2 7h4M2 10h4" stroke="#8aa0dd" />
            <circle cx="8.500" cy="7" r="3.500" fill="#fff" stroke="#1a1f55" strokeWidth="1.400" />
            <path d="M11 10l4 4" stroke="#1a1f55" strokeWidth="2" />
          </svg>
          Properties
        </MainTab>
        <MainTab $width={77}>
          <svg width="16" height="16" viewBox="0 0 16 16" aria-hidden="true">
            <path d="M3 .500H14V15.500H3z" fill="#f4f7ff" stroke="#b4c4ee" />
            <path d="M0 2.500h4M10 13.500h5M3 .500l2 2-2 2M13 11.500l2 2-2 2" fill="none" stroke="#14186a" strokeWidth="1.400" />
            <path d="M6.500 7H9V12M6.500 12h5M7.500 4h2" fill="none" stroke="#14186a" strokeWidth="2" />
          </svg>
          Info
          <svg width="13" height="13" viewBox="0 0 13 13" aria-hidden="true">
            <circle cx="6.500" cy="6.500" r="6" fill="#ffe400" stroke="#c9a800" />
            <path d="M5 5.500H7V9.500M4.500 9.800h4M5.800 3h1.600" fill="none" stroke="#000" strokeWidth="1.500" />
          </svg>
        </MainTab>
        <MainTab $width={122}>
          <svg width="13" height="16" viewBox="0 0 13 16" aria-hidden="true">
            <path d="M.500 .500H12.500V15.500H.500z" fill="#e4ebfc" stroke="#9db2e8" />
            <path d="M3 2.500V5a2.200 2.200 0 0 0 4.500 0V2.500M5.500 7.500V11.500a2 2 0 0 0 4.500 0V10" fill="none" stroke="#1a1f75" strokeWidth="1.300" />
          </svg>
          Diagnostics
        </MainTab>
        <MainTab $width={85} $plain>
          Plug-ins
        </MainTab>
        <WindowIcons>
          <svg width="12" height="12" viewBox="0 0 12 12" aria-label="Float">
            <path d="M3 0H12V9H9V3H3z M0 4H8V12H0z" fill="#fff" />
          </svg>
          <svg width="12" height="12" viewBox="0 0 12 12" aria-label="Dock">
            <path d="M0 1H12M.500 4.500H11.500M.500 7.500H11.500M0 10.500H12M.500 1V11M11.500 1V11" stroke="#fff" />
          </svg>
          <svg width="12" height="7" viewBox="0 0 12 7" aria-label="Collapse">
            <path d="M0 0H12L6 7z" fill="#fff" />
          </svg>
        </WindowIcons>
      </TitleBar>
      <SubTabs>
        <SubTab $active $width={99}>
          Properties
        </SubTab>
        <SubTab $width={77}>Events</SubTab>
        <SubTab $width={69}>Texts</SubTab>
        <SubTab $width={111}>Expressions</SubTab>
      </SubTabs>
      <Body>
        <PropertyPane />
        <Splitter>
          <SplitMark aria-label="Collapse left pane">
            <svg width="4" height="7" viewBox="0 0 4 7">
              <path d="M4 0V7L0 3.500z" />
            </svg>
          </SplitMark>
          <SplitMark aria-label="Collapse right pane">
            <svg width="4" height="7" viewBox="0 0 4 7">
              <path d="M0 0V7L4 3.500z" />
            </svg>
          </SplitMark>
        </Splitter>
        <ElementsPane />
      </Body>
      <ArrowLayer width="240" height="456" viewBox="0 0 240 456" aria-hidden="true">
        <path d="M226 455L15 20" stroke={ORANGE} strokeWidth="8" strokeDasharray="24 8" strokeDashoffset="7" />
        <path d="M6 0L27 16L6 26z" fill={ORANGE} />
      </ArrowLayer>
      <Callout $x={425} $y={152}>
        1
      </Callout>
      <Callout $x={135} $y={484}>
        2
      </Callout>
      <Callout $x={843} $y={704}>
        3
      </Callout>
      <Callout $x={1050} $y={482}>
        4
      </Callout>
    </Page>
  );
}
